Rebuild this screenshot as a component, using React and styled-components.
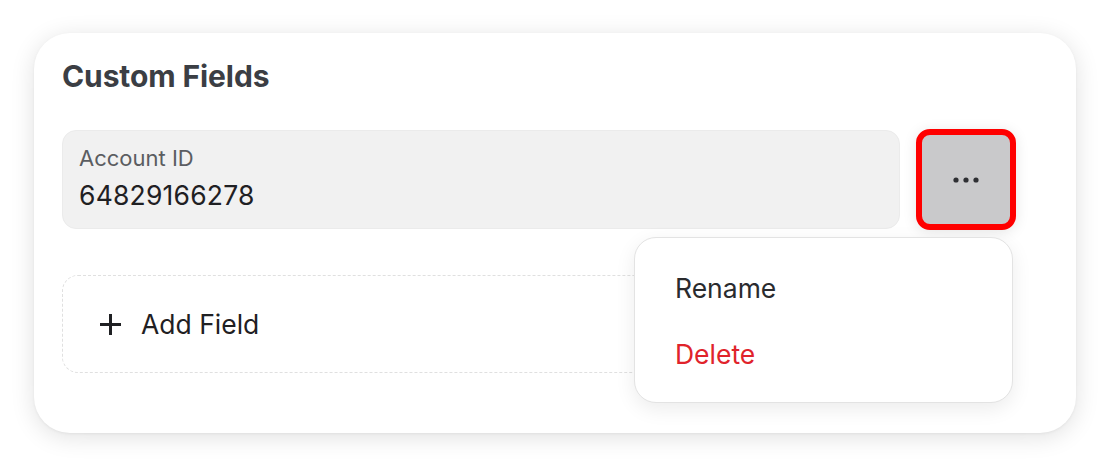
import React from "react";
import styled, { createGlobalStyle } from "styled-components";

const Global = createGlobalStyle`
  html, body { margin: 0; padding: 0; background: #ffffff; }
  body { font-family: Inter, "Noto Sans", sans-serif; -webkit-font-smoothing: antialiased; }
`;

const Page = styled.div`
  width: 1110px;
  height: 468px;
  padding: 33px 0 0 34px;
  box-sizing: border-box;
`;

const Card = styled.section`
  position: relative;
  width: 1042px;
  height: 400px;
  box-sizing: border-box;
  padding: 25px 28px 0;
  background: #fff;
  border-radius: 36px;
  box-shadow: 0 4px 24px rgba(0, 0, 0, 0.12), 0 1px 3px rgba(0, 0, 0, 0.05);
`;

const Title = styled.h2`
  margin: 0;
  font-size: 30px;
  line-height: 36px;
  font-weight: 700;
  color: #3b3e44;
  letter-spacing: -0.1px;
`;

const Row = styled.div`
  display: flex;
  align-items: center;
  gap: 16px;
  margin-top: 35px;
`;

const FieldBox = styled.div`
  width: 838px;
  height: 99px;
  box-sizing: border-box;
  padding: 14px 16px 0;
  background: #f1f1f1;
  border: 1px solid #ebebeb;
  border-radius: 14px;
  display: flex;
  flex-direction: column;
  gap: 7px;
`;

const FieldLabel = styled.div`
  font-size: 22px;
  line-height: 27px;
  color: #5b5d61;
`;

const FieldValue = styled.div`
  font-size: 26.5px;
  line-height: 32px;
  color: #1f2023;
  letter-spacing: 0.2px;
`;

const MoreButton = styled.button`
  width: 100px;
  height: 101px;
  box-sizing: border-box;
  border: 6px solid #ff0000;
  border-radius: 14px;
  background: #c9c9cb;
  display: flex;
  align-items: center;
  justify-content: center;
  padding: 0;
  box-shadow: 0 2px 14px rgba(0, 0, 0, 0.1);
`;

const AddField = styled.div`
  width: 838px;
  height: 98px;
  box-sizing: border-box;
  margin-top: 45px;
  border: 1.5px dashed #e0e0e0;
  border-radius: 16px;
  display: flex;
  align-items: center;
  gap: 20px;
  padding-left: 37px;
  font-size: 26.5px;
  color: #1f2023;
`;

const Menu = styled.div`
  position: absolute;
  top: 204px;
  right: 63px;
  width: 379px;
  height: 166px;
  box-sizing: border-box;
  background: #fff;
  border: 1px solid #e3e3e3;
  border-radius: 22px;
  box-shadow: 0 6px 20px rgba(0, 0, 0, 0.08);
  padding: 34px 0 0 40px;
  display: flex;
  flex-direction: column;
  gap: 34px;
`;

const MenuItem = styled.div`
  font-size: 26.5px;
  line-height: 32px;
  color: ${(p) => (p.$danger ? "#e0232b" : "#2a2b2e")};
`;

function Dots() {
  return (
    <svg width="28" height="8" viewBox="0 0 28 8">
      <circle cx="4" cy="4" r="2.6" fill="#2e2f33" />
      <circle cx="14" cy="4" r="2.6" fill="#2e2f33" />
      <circle cx="24" cy="4" r="2.6" fill="#2e2f33" />
    </svg>
  );
}

function Plus() {
  return (
    <svg width="21" height="21" viewBox="0 0 21 21">
      <path d="M10.5 1v19M1 10.5h19" stroke="#1f2023" strokeWidth="3" strokeLinecap="square" />
    </svg>
  );
}

export default function App() {
  return (
    <>
      <Global />
      <Page>
        <Card>
          <Title>Custom Fields</Title>
          <Row>
            <FieldBox>
              <FieldLabel>Account ID</FieldLabel>
              <FieldValue>64829166278</FieldValue>
            </FieldBox>
            <MoreButton aria-label="More">
              <Dots />
            </MoreButton>
          </Row>
          <AddField>
            <Plus />
            <span>Add Field</span>
          </AddField>
          <Menu>
            <MenuItem>Rename</MenuItem>
            <MenuItem $danger>Delete</MenuItem>
          </Menu>
        </Card>
      </Page>
    </>
  );
}
